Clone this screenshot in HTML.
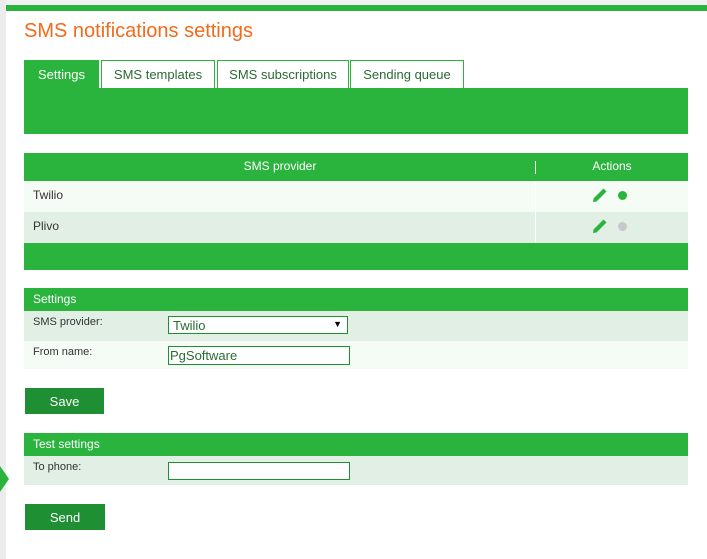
<!DOCTYPE html>
<html><head><style>
*{margin:0;padding:0;box-sizing:border-box}
body{width:707px;height:559px;background:#f2f2f2;font-family:"Liberation Sans",sans-serif;position:relative;overflow:hidden}
.a{position:absolute}
.g{background:#2ab43e}
.panel{left:6px;top:5px;width:701px;height:554px;background:#fff}
.t{font-size:12px;color:#333}
.w{color:#fff}
</style></head><body>
<div class="a" style="left:0;top:0;width:6px;height:559px;background:#ececec"></div>
<div class="a panel"></div>
<div class="a g" style="left:6px;top:5px;width:701px;height:6px"></div>
<div class="a" style="left:24px;top:20px;font-size:20px;color:#f26a1c">SMS notifications settings</div>

<div class="a g" style="left:24px;top:60px;width:75px;height:29px"></div>
<div class="a w" style="left:24px;top:67px;width:75px;text-align:center;font-size:13px">Settings</div>
<div class="a" style="left:101px;top:60px;width:114px;height:28px;border:1px solid #2ab43e;border-bottom:none;font-size:13px;color:#2a6a35;text-align:center;padding-top:6px">SMS templates</div>
<div class="a" style="left:217px;top:60px;width:132px;height:28px;border:1px solid #2ab43e;border-bottom:none;font-size:13px;color:#2a6a35;text-align:center;padding-top:6px">SMS subscriptions</div>
<div class="a" style="left:350px;top:60px;width:114px;height:28px;border:1px solid #2ab43e;border-bottom:none;font-size:13px;color:#2a6a35;text-align:center;padding-top:6px">Sending queue</div>
<div class="a g" style="left:24px;top:88px;width:664px;height:46px"></div>

<div class="a g" style="left:24px;top:153px;width:664px;height:28px"></div>
<div class="a w" style="left:24px;top:159px;width:512px;text-align:center;font-size:12px">SMS provider</div>
<div class="a" style="left:535px;top:161px;width:1px;height:13px;background:#fff"></div>
<div class="a w" style="left:536px;top:159px;width:152px;text-align:center;font-size:12px">Actions</div>
<div class="a" style="left:24px;top:181px;width:664px;height:31px;background:#f5fbf5"></div>
<div class="a" style="left:24px;top:212px;width:664px;height:31px;background:#e1efe4"></div>
<div class="a" style="left:535px;top:181px;width:1px;height:62px;background:#fff"></div>
<div class="a t" style="left:33px;top:188px">Twilio</div>
<div class="a t" style="left:33px;top:219px">Plivo</div>
<svg class="a" style="left:592px;top:187px" width="16" height="16" viewBox="0 0 16 16"><path d="M1 15 L1.5 11.5 L11.5 1.5 L14.5 4.5 L4.5 14.5 Z" fill="#2ab43e"/></svg>
<div class="a" style="left:618px;top:191px;width:9px;height:9px;border-radius:50%;background:#2ab43e"></div>
<svg class="a" style="left:592px;top:218px" width="16" height="16" viewBox="0 0 16 16"><path d="M1 15 L1.5 11.5 L11.5 1.5 L14.5 4.5 L4.5 14.5 Z" fill="#2ab43e"/></svg>
<div class="a" style="left:618px;top:222px;width:9px;height:9px;border-radius:50%;background:#c8c8c8"></div>
<div class="a g" style="left:24px;top:243px;width:664px;height:27px"></div>

<div class="a g" style="left:24px;top:288px;width:664px;height:23px"></div>
<div class="a w" style="left:33px;top:292px;font-size:12px">Settings</div>
<div class="a" style="left:24px;top:311px;width:664px;height:30px;background:#e1efe4"></div>
<div class="a" style="left:24px;top:341px;width:664px;height:28px;background:#f5fbf5"></div>
<div class="a t" style="left:33px;top:316px;font-size:11px">SMS provider:</div>
<div class="a t" style="left:33px;top:346px;font-size:11px">From name:</div>
<div class="a" style="left:168px;top:316px;width:180px;height:18px;border:1px solid #1e8f32;background:#fff;font-size:13px;color:#2a6a35;padding:1px 4px">Twilio<span style="position:absolute;right:5px;top:2px;font-size:9px;color:#000">▼</span></div>
<div class="a" style="left:168px;top:346px;width:182px;height:19px;border:1px solid #1e8f32;background:#fff;font-size:13px;color:#2a6a35;padding:1px 1px">PgSoftware</div>
<div class="a w" style="left:25px;top:388px;width:79px;height:26px;background:#1e8f32;text-align:center;font-size:13px;padding-top:6px">Save</div>

<div class="a g" style="left:24px;top:433px;width:664px;height:23px"></div>
<div class="a w" style="left:33px;top:437px;font-size:12px">Test settings</div>
<div class="a" style="left:24px;top:456px;width:664px;height:29px;background:#e1efe4"></div>
<div class="a t" style="left:33px;top:461px;font-size:11px">To phone:</div>
<div class="a" style="left:168px;top:462px;width:182px;height:18px;border:1px solid #1e8f32;background:#fff"></div>
<div class="a w" style="left:25px;top:504px;width:80px;height:26px;background:#1e8f32;text-align:center;font-size:13px;padding-top:6px">Send</div>
<svg class="a" style="left:0;top:466px" width="9" height="26"><path d="M0 0 L9 13 L0 26 Z" fill="#2ab43e"/></svg>
</body></html>
